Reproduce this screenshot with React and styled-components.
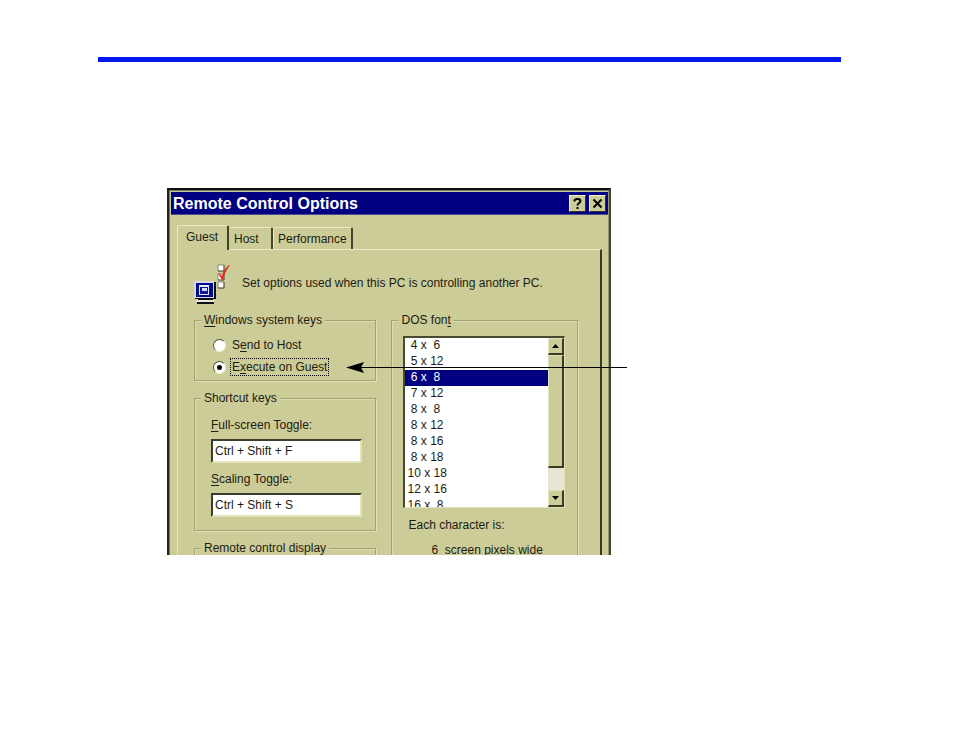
import { useState } from 'react';
import styled, { createGlobalStyle } from 'styled-components';

const GlobalStyle = createGlobalStyle`
  * {
    box-sizing: border-box;
  }
  body {
    margin: 0;
    background: #fff;
  }
`;

const Page = styled.main`
  padding: 57px 113px 40px 98px;
  color: #1c1c10;
  font-family: 'Liberation Sans', Arial, sans-serif;
  font-size: 12px;
  line-height: 16px;
  input,
  select,
  button {
    font: inherit;
    color: inherit;
  }
`;

const Rule = styled.hr`
  height: 5px;
  margin: 0;
  border: none;
  background: #0018f0;
`;

const Figure = styled.div`
  position: relative;
  width: 444px;
  margin: 126px 0 0 69px;
`;

/* only the upper part of the dialog is shown */
const Crop = styled.div`
  height: 367px;
  overflow: hidden;
`;

const Dialog = styled.section`
  background: #cccc99;
  border: 2px solid #222;
  border-right-color: #444433;
  border-top-color: #111;
  padding: 2px 1px 20px 2px;
  box-shadow: inset 1px 1px 0 #77776a, inset -1px 0 0 #99997a;
`;

const TitleBar = styled.header`
  display: flex;
  align-items: center;
  height: 23px;
  padding: 0 2px;
  background: #000080;
  border-bottom: 1px solid #4c4c90;
  h1 {
    flex: 1;
    margin: 0;
    padding-top: 2px;
    color: #fff;
    font: bold 16px/20px 'Liberation Sans', sans-serif;
  }
`;

const TitleButton = styled.button`
  display: flex;
  align-items: center;
  justify-content: center;
  width: 17px;
  height: 17px;
  margin-left: 3px;
  padding: 0;
  background: #cccc99;
  border: 1px solid;
  border-color: #f0f0d0 #33331c #33331c #f0f0d0;
`;

const Body = styled.div`
  padding: 10px 6px 0;
`;

const Tabs = styled.div`
  display: flex;
  align-items: flex-end;
`;

const Tab = styled.button`
  width: ${(props) => props.$width}px;
  height: ${(props) => (props.$active ? 25 : 22)}px;
  margin-bottom: ${(props) => (props.$active ? -1 : 0)}px;
  padding: 0 0 ${(props) => (props.$active ? 2 : 0)}px ${(props) => (props.$active ? 8 : 4)}px;
  text-align: left;
  background: #cccc99;
  border: solid;
  border-width: 1px 2px 0 1px;
  border-color: #e8e8c4 #44442a #44442a #e8e8c4;
  border-left-color: ${(props) => (props.$divided ? '#e8e8c4' : '#cccc99')};
  border-radius: 2px 2px 0 0;
`;

const Panel = styled.div`
  padding: 14px 22px 0 16px;
  border: solid;
  border-width: 1px 2px 0 1px;
  border-color: #e8e8c4 #3a3a22 #e8e8c4 #e8e8c4;
`;

const Intro = styled.div`
  display: flex;
  align-items: center;
  gap: 8px;
  height: 40px;
  margin-bottom: 8px;
  svg {
    flex: none;
  }
  p {
    margin: 0 0 2px;
    white-space: nowrap;
  }
`;

const Columns = styled.div`
  display: grid;
  grid-template-columns: 182fr 186fr;
  gap: 15px;
`;

const Stack = styled.div`
  display: flex;
  flex-direction: column;
  gap: 9px;
`;

const Group = styled.fieldset`
  min-width: 0;
  margin: 0;
  padding: ${(props) => props.$padding || '0'};
  border: 1px solid #a3a36c;
  box-shadow: 1px 1px 0 #e2e2bb, inset 1px 1px 0 #dcdcb2;
`;

const Legend = styled.legend`
  margin-left: 6px;
  padding: 0 3px;
  background: #cccc99;
`;

const GroupBody = styled.div`
  padding: ${(props) => props.$padding};
`;

const RadioRow = styled.label`
  display: flex;
  align-items: center;
  gap: 4px;
  height: 22px;
  input {
    appearance: none;
    width: 13px;
    height: 13px;
    margin: 0;
    border: 1px solid;
    border-color: #55553a #eeeed6 #eeeed6 #55553a;
    border-radius: 50%;
    background: #fff;
  }
  input:checked {
    background: radial-gradient(circle, #000 2px, #fff 3px);
  }
  span {
    padding: 0 1px;
    border: 1px dotted transparent;
  }
  input:checked + span {
    border-color: #000;
  }
`;

const Field = styled.label`
  display: block;
  & + & {
    margin-top: 8px;
  }
  input {
    display: block;
    width: 100%;
    height: 24px;
    margin-top: 6px;
    padding: 0 2px;
    background: #fff;
    border: 2px solid;
    border-color: #3c3c2c #e2e2bb #e2e2bb #3c3c2c;
    border-radius: 0;
  }
`;

const ListBox = styled.div`
  display: flex;
  height: 172px;
  border: 2px solid;
  border-width: 2px 1px 1px 2px;
  border-color: #4a4a33 #e2e2bb #e2e2bb #4a4a33;
  background: #fff;
`;

const FontSelect = styled.select`
  flex: 1;
  min-width: 0;
  height: 100%;
  appearance: none;
  padding: 0;
  border: none;
  border-radius: 0;
  outline: none;
  overflow: hidden;
  background: #fff;
  option {
    height: 16px;
    min-height: 16px;
    padding: 0 2px;
    line-height: 16px;
    white-space: pre;
    color: #1c1c10;
  }
  option:checked {
    color: #fff;
    background: #000080 linear-gradient(#000080, #000080);
  }
`;

const ScrollBar = styled.div`
  display: flex;
  flex-direction: column;
  width: 16px;
  background: #e6e6d2;
`;

const ScrollButton = styled.button`
  display: flex;
  align-items: center;
  justify-content: center;
  height: 17px;
  padding: 0;
  background: #cccc99;
  border: solid;
  border-width: 1px 2px 2px 1px;
  border-color: #e2e2bb #3a3a22 #3a3a22 #e2e2bb;
`;

const Thumb = styled.div`
  height: 113px;
  margin-bottom: auto;
  background: #cccc99;
  border: solid;
  border-width: 1px 2px 2px 1px;
  border-color: #e2e2bb #3a3a22 #3a3a22 #e2e2bb;
`;

const Note = styled.p`
  margin: 9px 0 0 ${(props) => (props.$indent ? 28 : 5)}px;
  white-space: pre;
`;

const Arrow = styled.svg`
  position: absolute;
  top: 173px;
  left: 179px;
`;

const Key = styled.u`
  text-decoration-thickness: 1px;
  text-underline-offset: 2px;
`;

const fonts = [
  ' 4 x  6',
  ' 5 x 12',
  ' 6 x  8',
  ' 7 x 12',
  ' 8 x  8',
  ' 8 x 12',
  ' 8 x 16',
  ' 8 x 18',
  '10 x 18',
  '12 x 16',
  '16 x  8',
];

const OptionsIcon = () => (
  <svg width="40" height="40" viewBox="0 0 40 40" aria-hidden="true">
    <path d="M0 17h20v17H0z" fill="#d8d8e0" />
    <path d="M20 18h2v17H1v-1h19z" fill="#111" />
    <path d="M2 19h17v14H2z" fill="#000c90" />
    <path d="M5 21h10v10H5z" fill="#e8e8fa" />
    <path d="M6 23h8v7H6z" fill="#10189c" />
    <path d="M8 24h5v3H8z" fill="#d8d8f8" />
    <path d="M2 36h18v2H2z" fill="#e8e8e0" />
    <path d="M4 35h15v1H4zM3 38h17v2H3z" fill="#111" />
    <path d="M24 1h6v6h-6zM24 10h6v6h-6zM24 18h6v6h-6z" fill="#fff" />
    <path d="M24 7V1h6M24 16v-6h6M24 24v-6h6" fill="none" stroke="#8a8a70" />
    <path d="M30 1v6h-6M30 10v6h-6M30 18v6h-6" fill="none" stroke="#33332a" />
    <path d="M24 9l2 1 2 2C29 8 31 4 35 1l1 0C33 5 30 10 29 16h-1z" fill="#e3281c" />
  </svg>
);

const App = () => {
  const [systemKeys, setSystemKeys] = useState('guest');
  const [dosFont, setDosFont] = useState(fonts[2]);

  return (
    <>
      <GlobalStyle />
      <Page>
        <Rule />
        <Figure>
          <Crop>
            <Dialog>
              <TitleBar>
                <h1>Remote Control Options</h1>
                <TitleButton aria-label="Help">
                  <svg width="11" height="13" viewBox="0 0 11 13">
                    <path
                      d="M2.500 4.500V3.500Q2.500 2 5.500 2T8.500 4Q8.500 5 7 6T5.500 8.500M5.500 10v2"
                      fill="none"
                      stroke="#000"
                      strokeWidth="2"
                    />
                  </svg>
                </TitleButton>
                <TitleButton aria-label="Close">
                  <svg width="11" height="11" viewBox="0 0 11 11">
                    <path d="M1.500 1.500l8 8M9.500 1.500l-8 8" stroke="#000" strokeWidth="2" />
                  </svg>
                </TitleButton>
              </TitleBar>
              <Body>
                <Tabs role="tablist">
                  <Tab role="tab" aria-selected="true" $width={52} $active $divided>
                    Guest
                  </Tab>
                  <Tab role="tab" aria-selected="false" $width={44}>
                    Host
                  </Tab>
                  <Tab role="tab" aria-selected="false" $width={80} $divided>
                    Performance
                  </Tab>
                </Tabs>
                <Panel role="tabpanel">
                  <Intro>
                    <OptionsIcon />
                    <p>Set options used when this PC is controlling another PC.</p>
                  </Intro>
                  <Columns>
                    <Stack>
                      <Group $padding="0 0 2px">
                        <Legend>
                          <Key>W</Key>indows system keys
                        </Legend>
                        <GroupBody $padding="6px 0 0 18px">
                          <RadioRow>
                            <input
                              type="radio"
                              name="systemKeys"
                              checked={systemKeys === 'host'}
                              onChange={() => setSystemKeys('host')}
                            />
                            <span>
                              S<Key>e</Key>nd to Host
                            </span>
                          </RadioRow>
                          <RadioRow>
                            <input
                              type="radio"
                              name="systemKeys"
                              checked={systemKeys === 'guest'}
                              onChange={() => setSystemKeys('guest')}
                            />
                            <span>
                              E<Key>x</Key>ecute on Guest
                            </span>
                          </RadioRow>
                        </GroupBody>
                      </Group>
                      <Group $padding="0 0 13px">
                        <Legend>Shortcut keys</Legend>
                        <GroupBody $padding="11px 13px 0 16px">
                          <Field>
                            <Key>F</Key>ull-screen Toggle:
                            <input type="text" defaultValue="Ctrl + Shift + F" />
                          </Field>
                          <Field>
                            <Key>S</Key>caling Toggle:
                            <input type="text" defaultValue="Ctrl + Shift + S" />
                          </Field>
                        </GroupBody>
                      </Group>
                      <Group $padding="0 0 40px">
                        <Legend>Remote control display</Legend>
                      </Group>
                    </Stack>
                    <Group>
                      <Legend id="dos-font">
                        DOS fon<Key>t</Key>
                      </Legend>
                      <GroupBody $padding="8px 12px 0 11px">
                        <ListBox>
                          <FontSelect
                            size={11}
                            aria-labelledby="dos-font"
                            value={dosFont}
                            onChange={(e) => setDosFont(e.target.value)}
                          >
                            {fonts.map((font) => (
                              <option key={font} value={font}>
                                {font.replace(/ /g, '\u00a0')}
                              </option>
                            ))}
                          </FontSelect>
                          <ScrollBar>
                            <ScrollButton aria-label="Scroll up">
                              <svg width="7" height="4" viewBox="0 0 7 4">
                                <path d="M0 4l3.500-4L7 4z" />
                              </svg>
                            </ScrollButton>
                            <Thumb />
                            <ScrollButton aria-label="Scroll down">
                              <svg width="7" height="4" viewBox="0 0 7 4">
                                <path d="M0 0h7L3.500 4z" />
                              </svg>
                            </ScrollButton>
                          </ScrollBar>
                        </ListBox>
                        <Note>Each character is:</Note>
                        <Note $indent>6  screen pixels wide</Note>
                      </GroupBody>
                    </Group>
                  </Columns>
                </Panel>
              </Body>
            </Dialog>
          </Crop>
          <Arrow width="281" height="12" viewBox="0 0 281 12" aria-hidden="true">
            <path d="M10 6.500H281" stroke="#000" />
            <path d="M0 6.500L18 1L15 6.500L18 12z" />
          </Arrow>
        </Figure>
      </Page>
    </>
  );
};

export default App;
